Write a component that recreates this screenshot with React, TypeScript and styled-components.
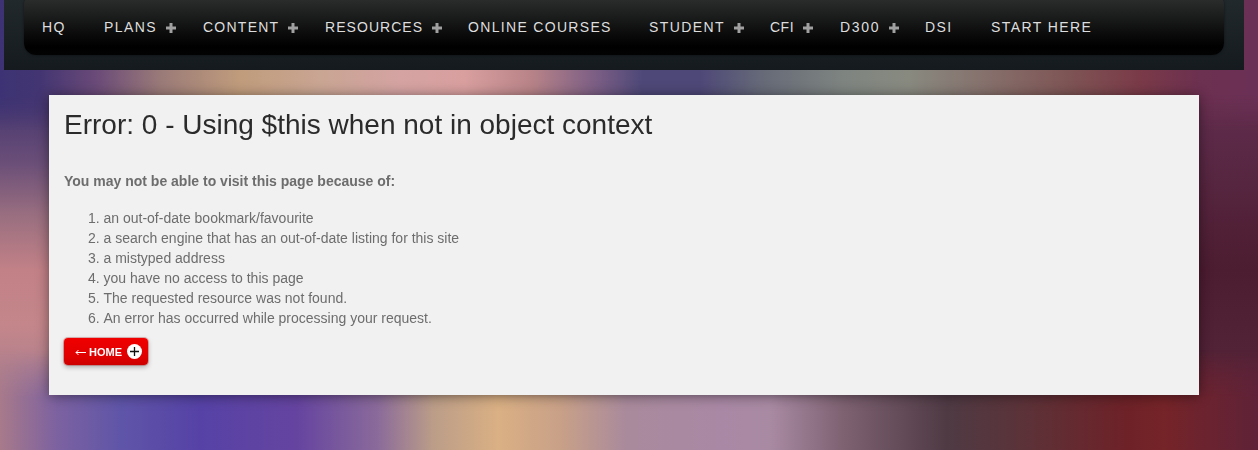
import React from "react";
import styled, { createGlobalStyle } from "styled-components";

const Global = createGlobalStyle`
  html, body { margin: 0; padding: 0; height: 450px; overflow: hidden; }
  body {
    font-family: "Liberation Sans", Arial, sans-serif;
    background-color: #5a3a60;
    background-image:
      linear-gradient(180deg, #3f3378 0%, #45366f 22%, #6a4e78 36%, #9a6f80 48%, #c28187 60%, #c4868a 72%, #ac7f8f 86%, #9a7496 100%),
      linear-gradient(180deg, #6c3054 0%, #5c2a48 30%, #4c1c30 60%, #522236 78%, #60243a 90%, #6a2430 100%);
    background-size: 70px 100%, 80px 100%;
    background-position: left top, right top;
    background-repeat: no-repeat;
  }
  body::before {
    content: "";
    position: fixed;
    left: 0;
    top: 0;
    width: 1258px;
    height: 130px;
    z-index: -1;
    background: linear-gradient(90deg,
      #3d3374 0, #433572 40px, #6a4a78 96px, #9a7a78 160px, #c09c7c 240px, #c9a593 320px,
      #d4a3a2 400px, #d99f9f 465px, #b98488 530px, #7d5f85 594px, #4e4878 642px, #4e4878 700px,
      #666a78 762px, #7e8480 843px, #888a80 907px, #86706c 987px, #7e5555 1067px, #7a3a48 1140px,
      #6c3050 1200px, #6b3056 1258px);
    -webkit-mask-image: linear-gradient(180deg, #000 0, #000 95px, transparent 130px);
    mask-image: linear-gradient(180deg, #000 0, #000 95px, transparent 130px);
  }
  body::after {
    content: "";
    position: fixed;
    left: 0;
    top: 350px;
    width: 1258px;
    height: 100px;
    z-index: -1;
    background: linear-gradient(90deg,
      #a87a8a 0, #7d62a0 56px, #5f55a8 120px, #5642a6 200px, #6544a0 297px, #8a6a9a 377px,
      #bb9d88 433px, #dab084 498px, #c8a088 562px, #a98a9c 626px, #a988a5 722px, #a98aa3 770px,
      #7e6272 843px, #4f3a44 947px, #5c3238 1027px, #6d2228 1124px, #752428 1164px, #5f2238 1258px);
    -webkit-mask-image: linear-gradient(180deg, transparent 0, #000 48px);
    mask-image: linear-gradient(180deg, transparent 0, #000 48px);
  }
`;

const Page = styled.div`
  width: 1258px;
  height: 450px;
  display: flex;
  flex-direction: column;
  overflow: hidden;
`;

const Header = styled.header`
  width: 1240px;
  height: 70px;
  margin-left: 4px;
  padding: 0 20px;
  box-sizing: border-box;
  background: linear-gradient(180deg, #22292c 0%, #141a1e 100%);
`;

const NavBar = styled.nav`
  height: 62px;
  margin-top: -7px;
  padding-top: 7px;
  box-sizing: border-box;
  display: flex;
  align-items: center;
  border-radius: 12px;
  background: linear-gradient(180deg, #2e3030 0%, #2a2c2c 11%, #0a0a0a 68%, #000 87%, #030303 100%);
  box-shadow: 0 0 3px rgba(0, 0, 0, .5);
  overflow: hidden;
`;

const NavItem = styled.a<{ $w: number; $ls: number }>`
  width: ${(p) => p.$w}px;
  flex: none;
  box-sizing: border-box;
  padding-left: 18px;
  display: flex;
  align-items: center;
  color: #dedede;
  font-family: "Liberation Sans", Arial, sans-serif;
  font-size: 14px;
  letter-spacing: ${(p) => p.$ls}px;
  white-space: nowrap;
  line-height: 53px;
  height: 55px;
`;

const Plus = styled.svg`
  width: 10px;
  height: 10px;
  margin-left: 9px;
  fill: #a0a0a0;
`;

const Panel = styled.main`
  width: 1150px;
  height: 300px;
  margin: 25px 0 0 49px;
  padding: 0 15px;
  box-sizing: border-box;
  background: #f1f1f1;
  box-shadow: 0 1px 12px rgba(0, 0, 0, .45);
  color: #6d6d6d;
  font-size: 14px;
`;

const Title = styled.h1`
  margin: 0;
  padding-top: 14px;
  font-size: 28px;
  line-height: 32px;
  font-weight: 400;
  color: #2b2b2b;
`;

const Lead = styled.p`
  margin: 30px 0 0;
  font-weight: 700;
  line-height: 20px;
`;

const Reasons = styled.ol`
  margin: 17px 0 0;
  padding-left: 39.5px;
  line-height: 20px;
`;

const HomeButton = styled.a`
  display: inline-flex;
  align-items: center;
  width: 84px;
  height: 27px;
  box-sizing: border-box;
  margin-top: 10px;
  padding-left: 11px;
  border-radius: 4px;
  background: linear-gradient(180deg, #f00000 0%, #e00000 70%, #cc0000 100%);
  box-shadow: 0 0 0 1px rgba(170,0,0,.25), 0 2px 5px rgba(0, 0, 0, .3);
  color: #fff;
  font-size: 11px;
  font-weight: 700;
`;

const Arrow = styled.svg`
  width: 11px;
  height: 7px;
  margin-right: 3px;
  margin-top: 2px;
`;

const PlusBadge = styled.span`
  width: 15px;
  height: 15px;
  margin-left: 5px;
  border-radius: 50%;
  background: #fff;
  display: flex;
  align-items: center;
  justify-content: center;
`;

const items: [string, number, boolean, number][] = [
  ["HQ", 62, false, 1.4],
  ["PLANS", 99, true, 1.4],
  ["CONTENT", 122, true, 1.25],
  ["RESOURCES", 143, true, 1.05],
  ["ONLINE COURSES", 181, false, 1.32],
  ["STUDENT", 121, true, 1.4],
  ["CFI", 70, true, 0.5],
  ["D300", 85, true, 1.7],
  ["DSI", 66, false, 1.4],
  ["START HERE", 150, false, 1.4],
];

const reasons = [
  "an out-of-date bookmark/favourite",
  "a search engine that has an out-of-date listing for this site",
  "a mistyped address",
  "you have no access to this page",
  "The requested resource was not found.",
  "An error has occurred while processing your request.",
];

export default function App() {
  return (
    <Page>
      <Global />
      <Header>
        <NavBar>
          {items.map(([label, w, plus, ls]) => (
            <NavItem key={label} $w={w} $ls={ls}>
              {label}
              {plus && (
                <Plus viewBox="0 0 10 10">
                  <path d="M3.500 0h3v3.500H10v3H6.500V10h-3V6.500H0v-3h3.500z" />
                </Plus>
              )}
            </NavItem>
          ))}
        </NavBar>
      </Header>
      <Panel>
        <Title>Error: 0 - Using $this when not in object context</Title>
        <Lead>You may not be able to visit this page because of:</Lead>
        <Reasons>
          {reasons.map((r) => (
            <li key={r}>{r}</li>
          ))}
        </Reasons>
        <HomeButton>
          <Arrow viewBox="0 0 11 7">
            <path d="M11 3.500H1M3.500 1 1 3.500 3.500 6" fill="none" stroke="#fff" strokeWidth="1" />
          </Arrow>
          HOME
          <PlusBadge>
            <svg width="9" height="9" viewBox="0 0 9 9">
              <path d="M4.500 0v9M0 4.500h9" stroke="#111" strokeWidth="1.300" />
            </svg>
          </PlusBadge>
        </HomeButton>
      </Panel>
    </Page>
  );
}
